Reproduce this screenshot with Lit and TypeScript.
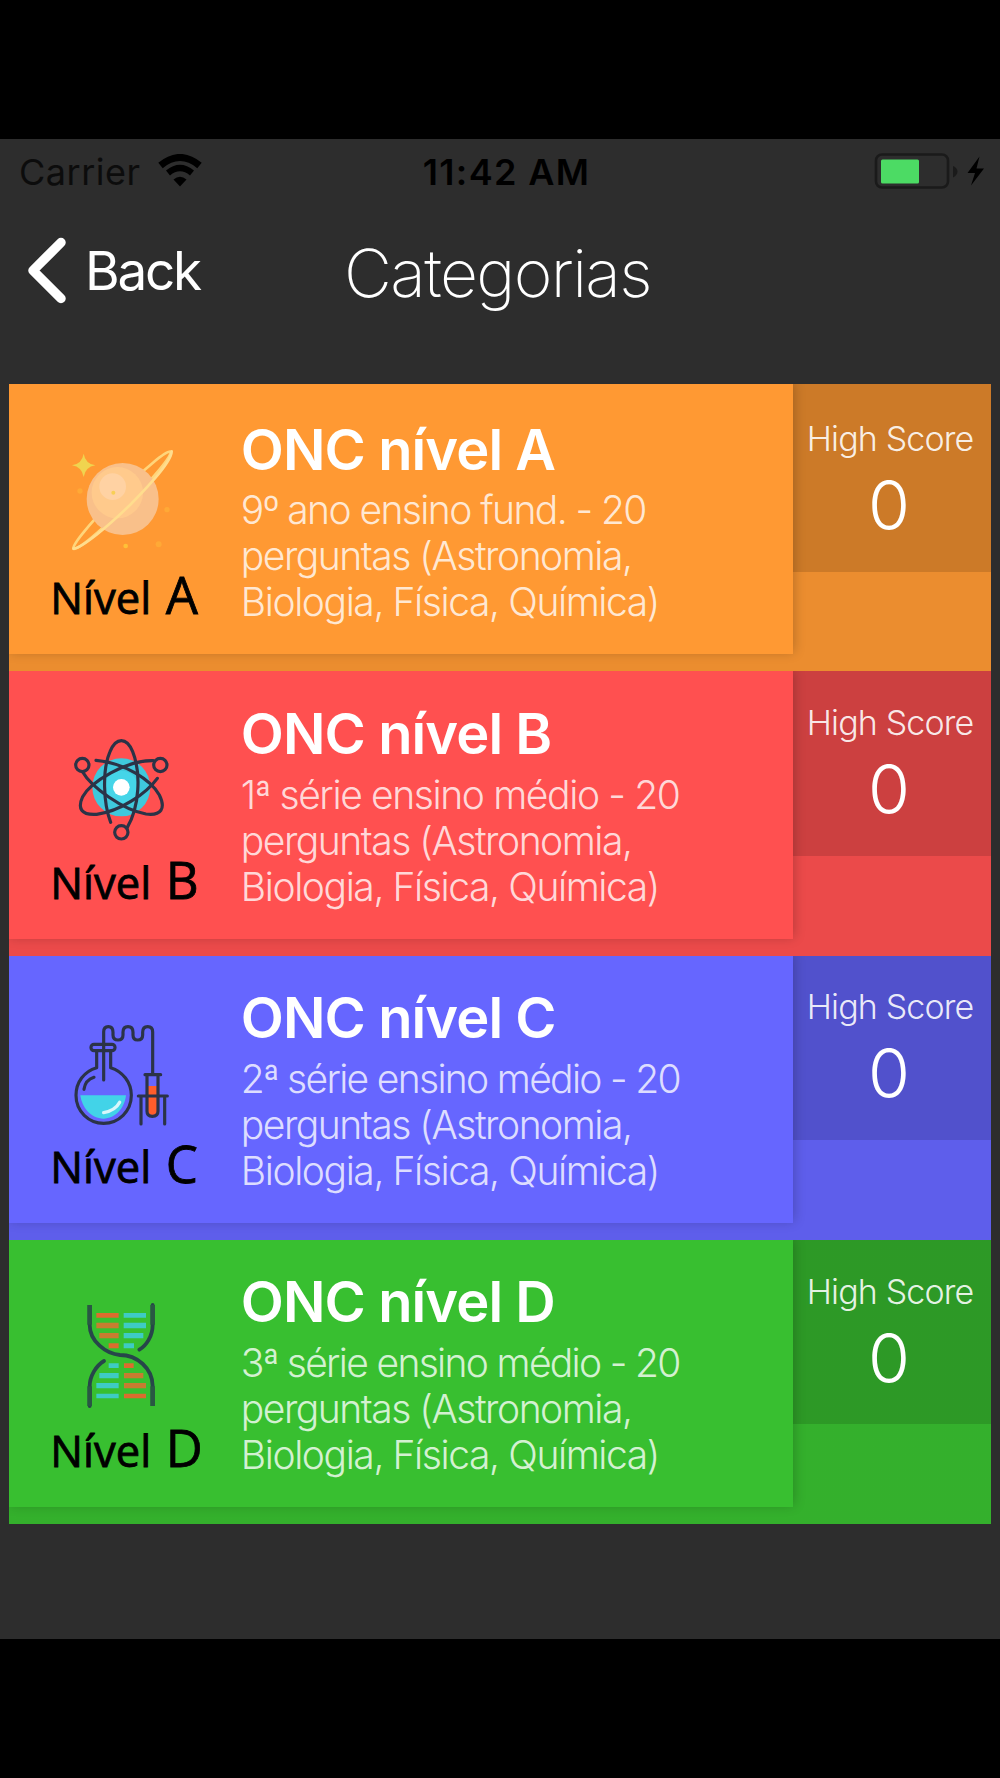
import { LitElement, html, svg, css } from "lit";
import { customElement, property } from "lit/decorators.js";

interface Category {
  letter: string;
  tone: string;
  lines: string[];
}

const TOPICS = ["perguntas (Astronomia,", "Biologia, Física, Química)"];

const CATEGORIES: Category[] = [
  { letter: "A", tone: "orange", lines: ["9º ano ensino fund. - 20", ...TOPICS] },
  { letter: "B", tone: "red", lines: ["1ª série ensino médio - 20", ...TOPICS] },
  { letter: "C", tone: "blue", lines: ["2ª série ensino médio - 20", ...TOPICS] },
  { letter: "D", tone: "green", lines: ["3ª série ensino médio - 20", ...TOPICS] },
];

const INK = "#2b3347";

const planet = svg`
  <g transform="rotate(-45 368 378)" fill="none" stroke="#ffd57a" stroke-width="8">
    <ellipse cx="368" cy="378" rx="206" ry="20"/>
  </g>
  <circle cx="370" cy="374" r="108" fill="#f9c08a"/>
  <circle cx="354" cy="355" r="77" fill="#ffca8c"/>
  <circle cx="340" cy="337" r="40" fill="#ffd2a3"/>
  <path d="M223 523C250 520 330 452 392 392C454 328 516 262 517 231" fill="none" stroke="#ffdd8e" stroke-width="8" stroke-linecap="round"/>
  <path d="M253 238Q258 268 288 273Q258 278 253 308Q248 278 218 273Q248 268 253 238Z" fill="#f0d44f"/>
  <circle cx="342" cy="355" r="6" fill="#f8cf55"/>
  <circle cx="379" cy="515" r="7" fill="#ffc038"/>
  <circle cx="503" cy="406" r="8" fill="#ffa936"/>
  <circle cx="478" cy="510" r="9" fill="#ffa936"/>
  <circle cx="242" cy="350" r="8" fill="#ffa936"/>`;

const atom = svg`
  <circle cx="366" cy="352" r="87" fill="#3fc8dc"/>
  <circle cx="366" cy="352" r="50" fill="#45d5e8"/>
  <circle cx="366" cy="352" r="25" fill="#fff"/>
  <g fill="none" stroke="${INK}" stroke-width="9.500" stroke-linecap="round">
    <path d="M334 457C312 400 308 300 332 245C350 201 382 201 400 245C426 310 420 410 384 472"/>
    <path d="M250 306C275 350 370 420 440 432C486 438 500 415 480 375C455 330 375 278 290 271"/>
    <path d="M462 272C380 270 275 335 250 380C234 415 245 436 292 433C360 425 440 372 474 325"/>
    <circle cx="249" cy="285" r="20"/>
    <circle cx="483" cy="285" r="20"/>
    <circle cx="366" cy="487" r="20"/>
  </g>`;

const flask = svg`
  <path d="M243 436H380C376 474 348 506 312 506C276 506 248 474 243 436Z" fill="#42d3e8"/>
  <path d="M361 457Q348 482 313 488" fill="none" stroke="#d8f7fb" stroke-width="10" stroke-linecap="round"/>
  <path d="M446 408H473V482Q473 495 459 495Q446 495 446 482Z" fill="#ff5d2b"/>
  <g fill="none" stroke="${INK}" stroke-width="9.500" stroke-linecap="round" stroke-linejoin="round">
    <path d="M292 304V353C254 364 230 397 230 436C230 484 268 520 313 520C358 520 396 484 396 436C396 397 370 364 334 353V304"/>
    <rect x="275" y="283" width="72" height="19" rx="9"/>
    <path d="M313 390V246Q313 230 327 230Q341 230 341 247V255Q341 270 356 270Q371 270 371 255V247Q371 230 386 230Q401 230 401 247V255Q401 270 415 270Q430 270 430 255V247Q430 230 445 230Q460 230 460 246V370"/>
    <path d="M254 418Q258 390 284 382"/>
    <path d="M437 374H484M443 376V484Q443 499 459 499Q476 499 476 484V376"/>
    <path d="M417 438H504M425 438V522M496 438V522"/>
  </g>`;

const dna = svg`
  <g fill="#3ecbc4">
    <path d="M373 235H440V249H373ZM373 264H440V281H373ZM373 295H432V311H373ZM373 326H404V341H373Z"/>
    <path d="M328 386H358V400H328ZM300 415H358V431H300ZM291 445H358V461H291ZM291 477H358V491H291Z"/>
  </g>
  <g fill="#c77c30">
    <path d="M291 264H358V281H291ZM300 295H358V311H300Z"/>
    <path d="M374 415H432V431H374ZM374 445H440V461H374Z"/>
  </g>
  <g fill="#dc6c2e">
    <path d="M291 235H358V249H291ZM328 326H358V341H328Z"/>
    <path d="M374 386H403V400H374ZM374 477H440V491H374Z"/>
  </g>
  <g fill="none" stroke="#27464a" stroke-width="11.500">
    <path d="M271 211V270C271 320 320 358 362 361C412 361 460 400 460 455V514"/>
    <path d="M460 211V270C460 305 440 334 420 345" stroke-linecap="round"/>
    <path d="M314 379C290 393 271 425 271 455V514" stroke-linecap="round"/>
    <path d="M271 211V270M460 211V270M271 455V514M460 455V514" stroke="#295843" stroke-width="14"/>
  </g>`;

const ICONS: Record<string, { art: unknown; top: number }> = {
  A: { art: planet, top: 200 },
  B: { art: atom, top: 168 },
  C: { art: flask, top: 180 },
  D: { art: dna, top: 178 },
};

@customElement("status-bar")
export class StatusBar extends LitElement {
  static styles = css`
    :host {
      display: grid;
      grid-template-columns: 1fr auto 1fr;
      height: 66px;
      padding: 0 15px 0 19px;
      align-items: center;
      font: 400 36px/66px Inter, "Liberation Sans", sans-serif;
      color: #000;
    }
    .left { display: flex; align-items: center; gap: 16px; letter-spacing: 0.5px; color: #0c0c0c; }
    .left span, .time { margin-top: -1px; }
    .time { font-weight: 600; letter-spacing: 1.350px; margin-left: 9px; }
    .right { display: flex; align-items: center; justify-content: flex-end; }
    svg { display: block; }
    .wifi { margin-top: -3px; }
  `;
  render() {
    return html`
      <div class="left">
        <span>Carrier</span>
        <svg class="wifi" width="46" height="34" viewBox="0 0 46 34">
          <path d="M3.500 11.500Q23 -4.500 42.500 11.500" fill="none" stroke="#000" stroke-width="7"/>
          <path d="M11 19Q23 9 35 19" fill="none" stroke="#000" stroke-width="6.200"/>
          <path d="M16.500 25.500Q23 20 29.500 25.500L23 32.500Z"/>
        </svg>
      </div>
      <div class="time">11:42 AM</div>
      <div class="right">
        <svg width="112" height="40" viewBox="0 0 112 40">
          <rect x="3" y="2.500" width="72" height="33" rx="6" fill="none" stroke="#1a1a1a" stroke-width="2.600"/>
          <rect x="8" y="7.500" width="38" height="24" rx="1.500" fill="#4cdb64"/>
          <path d="M80 14Q84.500 16 84.500 19.500Q84.500 23 80 25.500Z" fill="#1a1a1a"/>
          <path d="M106.500 4.500L94.500 21H102L98 33.500L111 16.500H103.500Z"/>
        </svg>
      </div>`;
  }
}

@customElement("nav-bar")
export class NavBar extends LitElement {
  static styles = css`
    :host {
      display: flex;
      height: 179px;
      box-sizing: border-box;
      padding: 29px 0 0 24px;
      color: #fff;
      font-family: Inter, "Liberation Sans", sans-serif;
    }
    .back { display: flex; height: 74px; align-items: center; width: 320px; }
    .back svg { display: block; margin-right: 17px; }
    .label { font-size: 53px; font-weight: 440; line-height: 74px; letter-spacing: -2.200px; }
    .title { font-size: 66px; font-weight: 180; line-height: 80px; letter-spacing: -1.600px; margin-top: -1px; }
  `;
  render() {
    return html`
      <div class="back">
        <svg width="44" height="70" viewBox="0 0 44 70">
          <path d="M37 6.500L9 34.500L37 62.500" fill="none" stroke="#fff" stroke-width="9.500" stroke-linecap="round" stroke-linejoin="round"/>
        </svg>
        <span class="label">Back</span>
      </div>
      <div class="title">Categorias</div>`;
  }
}

@customElement("category-row")
export class CategoryRow extends LitElement {
  @property({ attribute: false }) data!: Category;

  static styles = css`
    :host {
      display: block;
      height: 284.300px;
      font-family: Inter, "Liberation Sans", sans-serif;
      color: #fff;
    }
    :host([first]) { height: 287.300px; }
    .row { display: flex; height: 100%; overflow: hidden; align-items: flex-start; background: linear-gradient(rgba(0,0,0,.08), rgba(0,0,0,.08)) var(--tone); }
    .orange { --tone: #ff9933; }
    .red { --tone: #ff5050; --lead: -1.370px; }
    .blue { --tone: #6666ff; --lead: -1.680px; }
    .green { --tone: #38bf30; --lead: -1.680px; }
    .main {
      position: relative;
      display: flex;
      width: 784.200px;
      height: calc(100% - 17px);
      background: var(--tone);
      box-shadow: 1px -2px 11px rgba(0,0,0,.22);
    }
    .badge { width: 231.500px; padding-top: 54.300px; }
    :host([first]) .badge { padding-top: 57.300px; }
    .badge svg { display: block; width: 110px; height: 120px; margin-left: 57px; }
    .level {
      display: flex;
      align-items: baseline;
      margin: 6px 0 0 41px;
      height: 60px;
      color: #000;
      font: 500 43.500px/60px "Open Sans", "Noto Sans", sans-serif;
      -webkit-text-stroke: 0.800px #000;
    }
    .word { width: 115.500px; }
    .letter { font-size: 51px; line-height: 60px; margin-top: -3px; }
    .text { padding-top: 32.500px; white-space: nowrap; }
    :host([first]) .text { padding-top: 35.500px; }
    .name { font-size: 56px; line-height: 60px; font-weight: 600; letter-spacing: -0.900px; }
    .lines { margin-top: 7.900px; font-size: 39px; line-height: 46px; font-weight: 300; color: rgba(255,255,255,.8); }
    .line { letter-spacing: var(--lead, -1.580px); }
    .line:nth-child(2) { letter-spacing: -1.470px; }
    .line:nth-child(3) { letter-spacing: -1.400px; }
    .score {
      flex: 1;
      height: 184.500px;
      box-sizing: border-box;
      padding-top: 31.700px;
      text-align: center;
      font-weight: 300;
      background: rgba(0,0,0,.13);
    }
    :host([first]) .score { height: 187.800px; padding-top: 34.700px; }
    .caption { font-size: 34px; line-height: 40px; letter-spacing: -0.850px; margin-right: 4px; color: rgba(255,255,255,.9); }
    .value { font-size: 68px; line-height: 80px; margin: 6px 6px 0 0; }
  `;
  render() {
    const { letter, tone, lines } = this.data;
    const icon = ICONS[letter];
    return html`
      <div class="row ${tone}">
        <div class="main">
          <div class="badge">
            <svg viewBox="200 ${icon.top} 330 360">${icon.art}</svg>
            <div class="level"><span class="word">Nível</span><span class="letter">${letter}</span></div>
          </div>
          <div class="text">
            <div class="name">ONC nível ${letter}</div>
            <div class="lines">${lines.map((l) => html`<div class="line">${l}</div>`)}</div>
          </div>
        </div>
        <div class="score">
          <div class="caption">High Score</div>
          <div class="value">0</div>
        </div>
      </div>`;
  }
}

@customElement("app-root")
export class AppRoot extends LitElement {
  static styles = css`
    :host { display: block; height: 1778px; box-sizing: border-box; padding: 139px 0 139.500px; background: #000; }
    .screen { height: 100%; background: #2d2d2d; }
    .list { padding: 0 9.300px; }
  `;
  render() {
    return html`
      <div class="screen">
        <status-bar></status-bar>
        <nav-bar></nav-bar>
        <div class="list">
          ${CATEGORIES.map((c, i) => html`<category-row .data=${c} ?first=${i === 0}></category-row>`)}
        </div>
      </div>`;
  }
}
